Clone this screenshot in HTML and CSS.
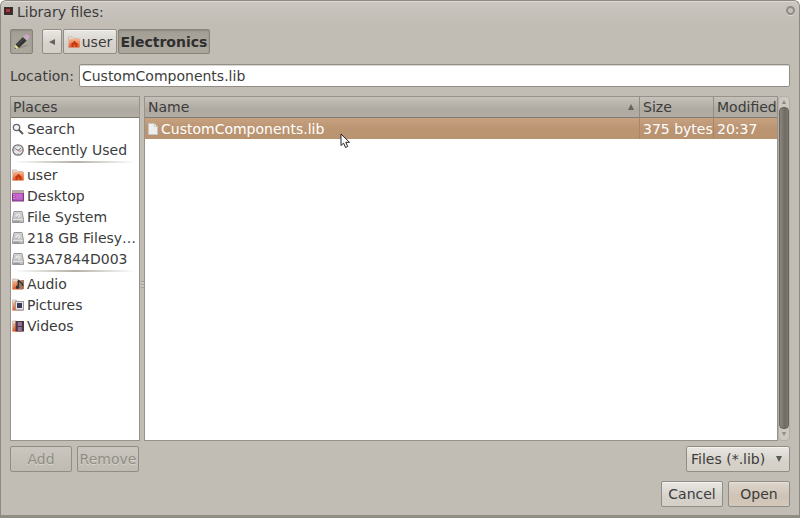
FILE: index.html
```html
<!DOCTYPE html>
<html lang="en">
<head>
    <meta charset="UTF-8">
    <meta name="viewport" content="width=device-width, initial-scale=1.0">
    <title>Library files:</title>
    <link rel="stylesheet" href="styles.css">
</head>
<body>
    <!-- icons used more than once -->
    <svg class="sprite" aria-hidden="true">
        <defs>
            <linearGradient id="orange" x1="0" y1="0" x2="0" y2="1">
                <stop offset="0" stop-color="#f6b48c"/>
                <stop offset="1" stop-color="#de5a26"/>
            </linearGradient>
            <linearGradient id="metal" x1="0" y1="0" x2="0" y2="1">
                <stop offset="0" stop-color="#dedede"/>
                <stop offset="1" stop-color="#bcbcbc"/>
            </linearGradient>
        </defs>
        <symbol id="home" viewBox="0 0 12 12">
            <path d="M.5 11V1h4l1 1.500h5.500v8z" fill="#e6dcd5" stroke="#c9b3a6" stroke-width=".8"/>
            <path d="M1.500 3H12l-.3 8.500H.5z" fill="url(#orange)"/>
            <path d="M2.500 8.500l4-3.700 4 3.700H9.500V11H7.300V8.800H5.700V11H3.500V8.500z" fill="#c8380f"/>
        </symbol>
        <symbol id="drive" viewBox="0 0 12 12">
            <path d="M2 .5h8l1.500 8v3H.5v-3z" fill="url(#metal)" stroke="#999"/>
            <ellipse cx="6" cy="4.500" rx="3.200" ry="2.700" fill="#e6e6e6" stroke="#b4b4b4" stroke-width=".7"/>
            <path d="M6.500 4.500L4 7.200" stroke="#999" stroke-width=".8"/>
            <path d="M1 8.500h10" stroke="#eee" stroke-width=".7"/>
            <path d="M1.500 10.300h6" stroke="#8f8f8f"/>
        </symbol>
        <symbol id="folder" viewBox="0 0 12 12">
            <path d="M.5 11V1h4l1 1.500h5.500v8z" fill="#e6dcd5" stroke="#c9b3a6" stroke-width=".8"/>
            <path d="M1 3h10v8.500H.5z" fill="url(#orange)"/>
        </symbol>
    </svg>

    <div class="window">
        <header class="titlebar">
            <svg class="app-icon" viewBox="0 0 9 8" aria-hidden="true">
                <rect x=".5" y=".5" width="8" height="7" fill="#4a2425" stroke="#333"/>
                <rect x="2" y="2" width="4" height="3" fill="#a33c3c"/>
            </svg>
            <h1>Library files:</h1>
            <button class="close" type="button" aria-label="Close"></button>
        </header>

        <main class="content">
            <nav class="pathbar" aria-label="Path">
                <button class="btn pressed edit" type="button" aria-label="Type a file name">
                    <svg width="18" height="18" viewBox="0 0 18 18">
                        <path d="M4 15.500q8-1 12-4l-5 1z" fill="#8f8b80"/>
                        <path d="M1.500 16l1-4.500 3.500 3.500z" fill="#f0e08a"/>
                        <path d="M1.500 16l.4-1.700 1.300 1.300z" fill="#333"/>
                        <path d="M2.500 11.500L10 4l3.700 3.500L6 15z" fill="#333"/>
                        <path d="M4.500 12L11.500 5" stroke="#5a5a5a"/>
                        <path d="M10 4l1.500-1.400 3.600 3.600-1.400 1.300z" fill="#b9b7b4"/>
                        <path d="M11.500 2.600q2.200-2 3.900-.4t-.3 4z" fill="#dc9dd6"/>
                    </svg>
                </button>
                <div class="crumbs">
                    <button class="btn back" type="button" aria-label="Back">
                        <svg width="6" height="6" viewBox="0 0 6 6"><path d="M0 3l6-3v6z" fill="#66645f"/></svg>
                    </button>
                    <button class="btn crumb" type="button"><svg class="icon"><use href="#home"/></svg>user</button>
                    <button class="btn crumb pressed current" type="button">Electronics</button>
                </div>
            </nav>

            <div class="location">
                <label for="location">Location:</label>
                <input id="location" type="text" value="CustomComponents.lib">
            </div>

            <div class="panes">
                <section class="places">
                    <h2 class="head">Places</h2>
                    <ul>
                        <li><a href="#search">
                            <svg class="icon" viewBox="0 0 12 12"><circle cx="4.500" cy="4.500" r="3.200" fill="#f4f4f4" stroke="#666" stroke-width="1.300"/><path d="M7 7l4 4" stroke="#555" stroke-width="1.800"/></svg>Search</a></li>
                        <li><a href="#recent">
                            <svg class="icon" viewBox="0 0 12 12"><circle cx="6" cy="6" r="5.200" fill="#e6e6e6" stroke="#777" stroke-width="1.300"/><path d="M2.500 4l3.500 2.500L9 4" fill="none" stroke="#777"/><path d="M6 6.500l3 .8" stroke="#cf5d5d" stroke-width=".8"/><path d="M6 1.500v1M6 9.500v1M1.500 6h1M9.500 6h1" stroke="#777"/></svg>Recently Used</a></li>
                        <li class="separator"></li>
                        <li><a href="#user"><svg class="icon"><use href="#home"/></svg>user</a></li>
                        <li><a href="#desktop">
                            <svg class="icon" viewBox="0 0 12 12"><rect x=".5" y="1" width="11" height="10" fill="#b04fb8" stroke="#7c3c82"/><rect y=".5" width="12" height="2.500" fill="#b5af9c"/><rect x="3.500" y="4" width="7" height="5.500" fill="#c468cc"/><path d="M1.500 4.500h1M1.500 6.500h1M1.500 8.500h1" stroke="#e8c4eb"/></svg>Desktop</a></li>
                        <li><a href="#filesystem"><svg class="icon"><use href="#drive"/></svg>File System</a></li>
                        <li><a href="#volume"><svg class="icon"><use href="#drive"/></svg>218 GB Filesy…</a></li>
                        <li><a href="#s3a7844d003"><svg class="icon"><use href="#drive"/></svg>S3A7844D003</a></li>
                        <li class="separator"></li>
                        <li><a href="#audio">
                            <svg class="icon" viewBox="0 0 12 12"><use href="#folder"/><path d="M5 3l7-1v9H4z" fill="#a0755c"/><path d="M6.500 9V2.500L10.500 6v2" fill="none" stroke="#333" stroke-width="1.300"/><circle cx="5.500" cy="9.300" r="1.700" fill="#333"/></svg>Audio</a></li>
                        <li><a href="#pictures">
                            <svg class="icon" viewBox="0 0 12 12"><use href="#folder"/><rect x="3.500" y="2.500" width="8" height="8.500" fill="#e4e4e4" stroke="#999"/><rect x="5" y="4" width="5" height="5" fill="#3c3a5c"/></svg>Pictures</a></li>
                        <li><a href="#videos">
                            <svg class="icon" viewBox="0 0 12 12"><use href="#folder"/><rect x="3.500" y="1" width="8.500" height="10.500" fill="#4b3846"/><rect x="5.800" y="2" width="4" height="4" fill="#94709a"/><rect x="5.800" y="7" width="4" height="4" fill="#94709a"/></svg>Videos</a></li>
                    </ul>
                </section>

                <div class="grip"><span></span></div>

                <section class="files">
                    <table>
                        <colgroup>
                            <col>
                            <col class="col-size">
                            <col class="col-modified">
                        </colgroup>
                        <thead>
                            <tr class="head">
                                <th><div class="sorted">Name<svg width="6" height="6" viewBox="0 0 6 6" aria-hidden="true"><path d="M3 0l3 6H0z" fill="#66645f"/></svg></div></th>
                                <th>Size</th>
                                <th>Modified</th>
                            </tr>
                        </thead>
                        <tbody>
                            <tr class="selected">
                                <td><div class="file"><svg width="10" height="12" viewBox="0 0 10 12" aria-hidden="true"><path d="M.5.5h6l3 3v8h-9z" fill="#eee" stroke="#c9c5c0"/><path d="M6.500.5v3h3z" fill="#fff" stroke="#b5b1ac" stroke-width=".7"/></svg>CustomComponents.lib</div></td>
                                <td>375 bytes</td>
                                <td>20:37</td>
                            </tr>
                        </tbody>
                    </table>
                    <svg class="pointer" width="11" height="16" viewBox="0 0 11 16" aria-hidden="true">
                        <path d="M1 1v11.500l2.600-2.400 1.900 4.400 2.200-1-1.900-4.200h3.700z" fill="#fff" stroke="#222"/>
                    </svg>
                </section>

                <div class="scrollbar">
                    <svg width="4" height="4" viewBox="0 0 4 4"><path d="M2 0l2 4H0z" fill="#8d897f"/></svg>
                    <div class="thumb"></div>
                    <svg width="4" height="4" viewBox="0 0 4 4"><path d="M0 0h4L2 4z" fill="#8d897f"/></svg>
                </div>
            </div>

            <div class="tools">
                <button class="btn" type="button" disabled>Add</button>
                <button class="btn" type="button" disabled>Remove</button>
                <div class="filter">
                    <select class="btn" aria-label="File type">
                        <option>Files (*.lib)</option>
                    </select>
                    <svg width="6" height="6" viewBox="0 0 6 6" aria-hidden="true"><path d="M0 0h6L3 6z" fill="#5a5853"/></svg>
                </div>
            </div>

            <footer class="actions">
                <button class="btn" type="button">Cancel</button>
                <button class="btn default" type="button">Open</button>
            </footer>
        </main>
    </div>
</body>
</html>
```
FILE: styles.css
```css
* {
    box-sizing: border-box;
}

body {
    margin: 0;
    background: #fff;
    color: #3c3c3c;
    font-family: "DejaVu Sans", sans-serif;
    font-size: 14px;
    line-height: 20px;
}

button, input, select {
    font: inherit;
    color: inherit;
}

h1, h2 {
    margin: 0;
    font-size: 14px;
    font-weight: normal;
}

.sprite {
    position: absolute;
    width: 0;
    height: 0;
}

.window {
    display: flex;
    flex-direction: column;
    height: 100vh;
    background: linear-gradient(#cbc7c0, #c1bcb4 24px);
    border: 1px solid #8e8a82;
    border-bottom: 3px solid #918d84;
    border-radius: 6px 6px 0 0;
    box-shadow: inset 0 1px #dedbd5;
}

.titlebar {
    display: flex;
    align-items: center;
    gap: 4px;
    height: 22px;
    padding: 0 4px 0 3px;
}

.app-icon {
    width: 9px;
    height: 8px;
    margin-bottom: 3px;
}

.close {
    width: 9px;
    height: 9px;
    margin: 0 0 4px auto;
    padding: 0;
    background: #c5c1b9;
    border: 2px solid #8f8b84;
    border-radius: 50%;
    box-shadow: 0 1px #dedbd5;
}

.content {
    display: flex;
    flex: 1;
    flex-direction: column;
    min-height: 0;
    padding: 6px 9px 8px;
}

.btn {
    height: 26px;
    padding: 0;
    background: linear-gradient(#e9e7e3, #d6d2cb 60%, #d4d0c8);
    border: 1px solid #918d85;
    border-radius: 2px;
    box-shadow: inset 0 1px #f3f2ef;
}

.btn.pressed {
    background: linear-gradient(#a39f95, #aca89e);
    border-color: #87837a;
    box-shadow: inset 0 1px 2px #8f8b82;
}

.btn.default {
    background: linear-gradient(#ddd5cb, #cfc3b5 60%, #d3c8bb);
    box-shadow: inset 0 1px #e9e3dc;
}

.btn:disabled {
    background: linear-gradient(#cac6bf, #bfbab2);
    color: #918d84;
    text-shadow: 0 1px #d8d5cf;
    box-shadow: none;
}

/* path */
.pathbar {
    display: flex;
    gap: 9px;
}

.pathbar .btn {
    display: flex;
    align-items: center;
    justify-content: center;
    height: 25px;
}

.pathbar .edit {
    width: 23px;
}

.crumbs {
    display: flex;
    gap: 1px;
}

.back {
    width: 20px;
}

.crumb {
    gap: 2px;
    width: 54px;
}

.current {
    width: 92px;
    font-weight: bold;
    color: #2f2f2f;
}

.icon {
    flex: none;
    width: 12px;
    height: 12px;
}

/* location */
.location {
    display: flex;
    align-items: center;
    gap: 5px;
    margin: 10px 0 9px;
}

.location input {
    flex: 1;
    min-width: 0;
    height: 23px;
    padding: 0 2px;
    background: #fff;
    border: 1px solid #928e86;
    border-radius: 2px;
    box-shadow: inset 0 1px #d9d7d3;
}

/* panes */
.panes {
    display: flex;
    flex: 1;
    min-height: 0;
}

.places, .files {
    background: #fff;
    border: 1px solid #97938a;
}

.places {
    flex: none;
    width: 130px;
}

.head {
    height: 21px;
    background: linear-gradient(#c6c2bb, #aeaaa1 60%, #b2aea5);
}

.places .head {
    padding-left: 2px;
    border-bottom: 1px solid #7f7b72;
}

.places ul {
    margin: 0;
    padding: 0;
    list-style: none;
}

.places a {
    display: flex;
    align-items: center;
    gap: 3px;
    height: 21px;
    padding-left: 1px;
    color: inherit;
    text-decoration: none;
    white-space: nowrap;
}

.separator {
    height: 4px;
    padding: 1px 3px;
}

.separator::before {
    content: "";
    display: block;
    height: 2px;
    background: linear-gradient(90deg, #fff, #b5b1a7 50%, #fff);
}

.grip {
    display: flex;
    align-items: center;
    justify-content: center;
    width: 4px;
}

.grip span {
    width: 3px;
    height: 7px;
    margin-top: 32px;
    background: repeating-linear-gradient(#a8a49b 0 1px, #c9c5be 1px 3px);
}

.files {
    position: relative;
    flex: 1;
    min-width: 0;
}

.files table {
    width: 100%;
    table-layout: fixed;
    border-collapse: separate;
    border-spacing: 0;
    background: #fff;
}

.col-size {
    width: 74px;
}

.col-modified {
    width: 64px;
}

.files th, .files td {
    height: 21px;
    padding: 0 0 0 3px;
    font-weight: normal;
    text-align: left;
    white-space: nowrap;
}

.files th {
    border-bottom: 1px solid #7f7b72;
}

.files th + th {
    border-left: 1px solid #918d84;
}

.files td + td {
    border-left: 1px solid #a98565;
}

.sorted {
    display: flex;
    align-items: center;
    justify-content: space-between;
    padding-right: 5px;
}

.selected {
    background: linear-gradient(#c7a281, #bb9572 50%, #ba9471);
    color: #fff;
}

.file {
    display: flex;
    align-items: center;
    gap: 3px;
}

/* mouse pointer over the selected row */
.pointer {
    position: absolute;
    top: 36px;
    left: 195px;
}

.scrollbar {
    display: flex;
    flex-direction: column;
    align-items: center;
    justify-content: space-between;
    width: 12px;
    padding: 3px 0 4px;
    background: #cdc9c2;
    border: 1px solid #b2aea5;
    border-radius: 4px;
}

.thumb {
    flex: 1;
    width: 10px;
    margin: 3px 0;
    background: linear-gradient(90deg, #8c887f, #6f6b63 60%, #7c786f);
    border: 1px solid #69655d;
    border-radius: 4px;
}

/* buttons below the panes */
.tools {
    display: flex;
    gap: 5px;
    margin-top: 5px;
}

.tools > .btn {
    width: 62px;
}

.filter {
    position: relative;
    margin-left: auto;
}

.filter select {
    width: 104px;
    padding: 0 22px 0 4px;
    appearance: none;
}

.filter svg {
    position: absolute;
    top: 10px;
    right: 8px;
    pointer-events: none;
}

.actions {
    display: flex;
    justify-content: flex-end;
    gap: 5px;
    margin-top: 9px;
}

.actions .btn {
    width: 62px;
}
```
